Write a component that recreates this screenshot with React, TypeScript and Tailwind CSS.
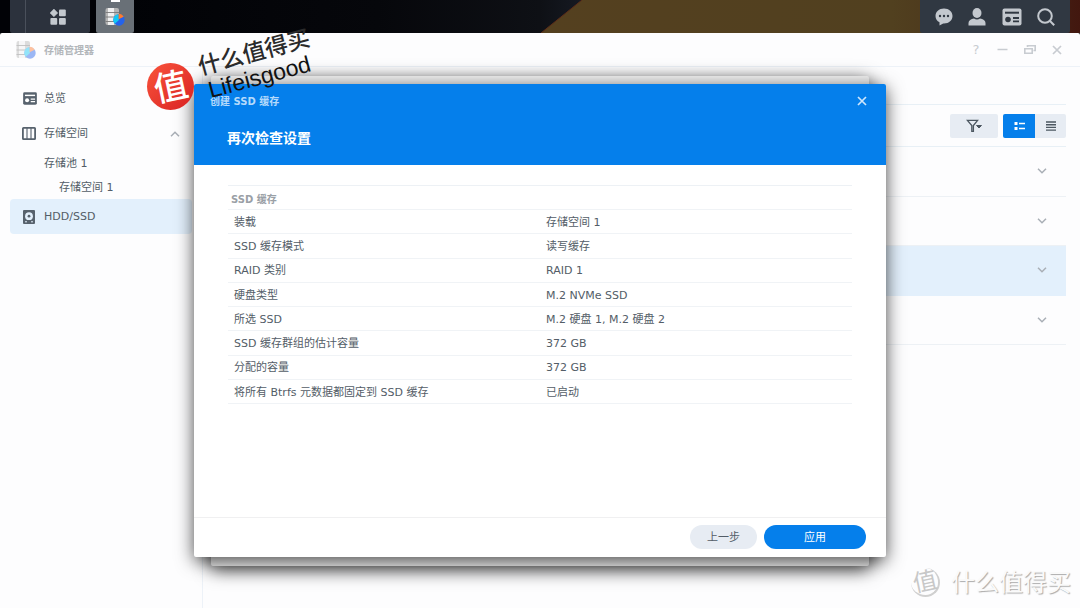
import type { ReactNode } from "react";

const rows = [
  ["装载", "存储空间 1"],
  ["SSD 缓存模式", "读写缓存"],
  ["RAID 类别", "RAID 1"],
  ["硬盘类型", "M.2 NVMe SSD"],
  ["所选 SSD", "M.2 硬盘 1, M.2 硬盘 2"],
  ["SSD 缓存群组的估计容量", "372 GB"],
  ["分配的容量", "372 GB"],
  ["将所有 Btrfs 元数据都固定到 SSD 缓存", "已启动"],
];

function StorageIcon({ className }: { className?: string }) {
  return (
    <svg viewBox="0 0 20 20" className={className} aria-hidden="true">
      <rect x="0.5" y="1" width="13.5" height="17" rx="2" fill="#b5b5b5" />
      <rect x="3" y="1" width="6" height="17" fill="#efefef" />
      <path d="M0.5 5.5h13.500M0.500 10h13.500M0.500 14.500h13.500" stroke="#777" strokeWidth="0.9" />
      <circle cx="14" cy="13" r="5.7" fill="#2563eb" />
      <path d="M14 13L9.8 16.8A5.700 5.700 0 0 1 13.600 7.300z" fill="#12c8f4" />
      <path d="M13.600 12.300V6.800A5.700 5.700 0 0 1 18.600 9.800z" fill="#ff7a2e" />
    </svg>
  );
}

function CardIcon({ className, cut }: { className?: string; cut: string }) {
  return (
    <svg viewBox="0 0 20 18" className={className} aria-hidden="true">
      <rect x="0.5" y="0.5" width="19" height="17" rx="2" fill="currentColor" />
      <path d="M3 4.7h14" stroke={cut} strokeWidth="2" />
      <circle cx="6" cy="11.5" r="2.8" fill={cut} />
      <path d="M11 10h6M11 13.4h6" stroke={cut} strokeWidth="1.8" />
    </svg>
  );
}

function Chevron({ up }: { up?: boolean }) {
  return (
    <svg
      viewBox="0 0 10 6"
      className="h-[6px] w-[10px]"
      fill="none"
      stroke="#a9afb6"
      strokeWidth="1.5"
      aria-hidden="true"
    >
      <path d={up ? "M1 5.2l4-4 4 4" : "M1 0.8l4 4 4-4"} />
    </svg>
  );
}

function Taskbar() {
  return (
    <header className="relative flex h-[33px] shrink-0 justify-between bg-[#010206] px-[10px] text-[#c3c8ce]">
      <svg
        viewBox="0 0 1080 33"
        preserveAspectRatio="none"
        className="absolute inset-0 h-full w-full"
        aria-hidden="true"
      >
        <defs>
          <linearGradient id="night">
            <stop offset="0.1" stopColor="#010206" />
            <stop offset="0.35" stopColor="#06070b" />
            <stop offset="0.5" stopColor="#0e1015" />
            <stop offset="0.55" stopColor="#181c26" />
          </linearGradient>
          <linearGradient id="sand">
            <stop offset="0" stopColor="#54401f" />
            <stop offset="0.65" stopColor="#51401f" />
            <stop offset="0.85" stopColor="#49301a" />
            <stop offset="1" stopColor="#42170f" />
          </linearGradient>
        </defs>
        <path d="M0 0h1080v33H0z" fill="url(#night)" />
        <path d="M582 0H1080V33H541z" fill="url(#sand)" />
        <path d="M582 0L541 33" stroke="#5c2c18" />
      </svg>
      <div className="relative flex gap-[6px]">
        <div className="flex w-[80px] rounded-b-xs bg-[#2c323d]">
          <span className="w-4 border-r border-[#4a505b]" />
          <button aria-label="主菜单" className="flex flex-1 items-center justify-center">
            <svg viewBox="0 0 16 16" className="h-4 w-4" fill="currentColor" aria-hidden="true">
              <path d="M3.9 0L7.8 3.9 3.9 7.8 0 3.9z" stroke="currentColor" strokeLinejoin="round" strokeWidth="0.5" />
              <rect x="9" y="0.5" width="6.8" height="6.8" rx="1" />
              <rect x="0.4" y="9" width="6.8" height="6.8" rx="1" />
              <rect x="9" y="9" width="6.8" height="6.8" rx="1" />
            </svg>
          </button>
        </div>
        <button
          aria-label="存储管理器"
          className="relative flex w-[38px] items-center justify-center rounded-b-xs bg-[#697077]"
        >
          <span className="absolute top-0 h-[2px] w-[9px] bg-white" />
          <StorageIcon className="h-5 w-5" />
        </button>
      </div>
      <div className="relative flex w-[150px] items-center justify-between rounded-b-xs bg-[#303842] px-[15px]">
        <button aria-label="消息">
          <svg viewBox="0 0 18 18" className="h-[18px] w-[18px]" aria-hidden="true">
            <path d="M9 0.5C4 0.5 0.5 3.7 0.5 8c0 2.8 1.5 5 4 6.3V17.5l3.7-2h.8c5 0 8.5-3.2 8.5-7.5S14 .5 9 .5z" fill="currentColor" />
            <circle cx="5" cy="8" r="1.2" fill="#303842" />
            <circle cx="9" cy="8" r="1.2" fill="#303842" />
            <circle cx="13" cy="8" r="1.2" fill="#303842" />
          </svg>
        </button>
        <button aria-label="用户">
          <svg viewBox="0 0 18 18" className="h-[18px] w-[18px]" fill="currentColor" aria-hidden="true">
            <ellipse cx="9" cy="5" rx="4.5" ry="5" />
            <path d="M.5 17.5v-2.5c0-2.5 2.5-4 5.5-4.5 1.8 1.4 4.2 1.4 6 0 3 .5 5.5 2 5.5 4.5v2.5z" />
          </svg>
        </button>
        <button aria-label="小组件">
          <CardIcon className="h-[18px] w-5" cut="#303842" />
        </button>
        <button aria-label="搜索">
          <svg viewBox="0 0 18 18" className="h-[18px] w-[18px]" fill="none" stroke="currentColor" strokeWidth="2" aria-hidden="true">
            <circle cx="8" cy="8" r="6.8" />
            <path d="M12.8 12.8l4.4 4.4" />
          </svg>
        </button>
      </div>
    </header>
  );
}

function TitleBar() {
  return (
    <div className="flex h-[34px] shrink-0 items-center justify-between border-b border-[#edf2f8] pr-[18px] pl-4 text-[#c8ccd1]">
      <div className="flex items-center gap-2">
        <StorageIcon className="h-5 w-5 opacity-45" />
        <span className="pt-[2px] text-[10px] font-bold text-[#b2b6ba]">存储管理器</span>
      </div>
      <div className="flex items-center gap-[16px]">
        <button aria-label="帮助" className="w-[10px] text-[13px]">?</button>
        <button aria-label="最小化">
          <svg viewBox="0 0 11 11" className="h-[11px] w-[11px]" stroke="currentColor" strokeWidth="1.5" aria-hidden="true">
            <path d="M0.5 5.5h10" />
          </svg>
        </button>
        <button aria-label="还原">
          <svg viewBox="0 0 12 11" className="h-[11px] w-3" fill="none" stroke="currentColor" strokeWidth="1.6" aria-hidden="true">
            <path d="M3.5 3V1.8h7.7v4.7H9.5" />
            <path d="M.8 4.8h7.4v4.4H.8z" />
          </svg>
        </button>
        <button aria-label="关闭">
          <svg viewBox="0 0 10 10" className="h-[10px] w-[10px]" stroke="currentColor" strokeWidth="1.7" aria-hidden="true">
            <path d="M1 1l8 8M9 1L1 9" />
          </svg>
        </button>
      </div>
    </div>
  );
}

function NavItem({ icon, label, active, children }: { icon: ReactNode; label: string; active?: boolean; children?: ReactNode }) {
  return (
    <a
      href="#"
      className={
        active
          ? "flex h-[35px] items-center rounded-sm bg-[#e3f0fc] px-3"
          : "flex h-[35px] items-center px-3"
      }
    >
      <span className="flex w-[22px] text-[#57626d]">{icon}</span>
      <span className="flex-1 pt-[2px]">{label}</span>
      {children}
    </a>
  );
}

function Sidebar() {
  return (
    <nav className="w-[203px] shrink-0 border-r border-[#edf2f8] pt-[14px] pr-[10px] pl-[10px]">
      <NavItem label="总览" icon={<CardIcon className="h-[13px] w-4" cut="#fff" />} />
      <NavItem
        label="存储空间"
        icon={
          <svg viewBox="0 0 14 13" className="h-[13px] w-[14px]" fill="none" stroke="currentColor" aria-hidden="true">
            <rect x="0.9" y="0.9" width="12.2" height="11.2" rx="0.6" strokeWidth="1.8" />
            <path d="M5 1v11M9 1v11" strokeWidth="1.1" />
          </svg>
        }
      >
        <Chevron up />
      </NavItem>
      <a href="#" className="flex h-6 items-center pt-[2px] pl-[34px]">存储池 1</a>
      <a href="#" className="flex h-6 items-center pt-[2px] pl-[49px]">存储空间 1</a>
      <NavItem
        active
        label="HDD/SSD"
        icon={
          <svg viewBox="0 0 14 14" className="h-[14px] w-[14px]" aria-hidden="true">
            <rect x="1" width="12" height="14" rx="1" fill="currentColor" />
            <circle cx="7" cy="6.2" r="3.9" fill="#e3f0fc" />
            <circle cx="7" cy="6.2" r="1.4" fill="currentColor" />
            <path d="M3 11.800h8" stroke="#e3f0fc" strokeDasharray="2 4" />
          </svg>
        }
      />
    </nav>
  );
}

function DriveList() {
  return (
    <main className="min-w-0 flex-1 pt-[37px] pr-[14px]">
      <div className="flex h-[43px] items-center justify-end gap-[5px] border-y border-[#e8f0f6] text-[#4c5761]">
        <button aria-label="筛选" className="flex h-6 w-12 items-center justify-center rounded-xs bg-[#e7ecf3]">
          <svg viewBox="0 0 16 13" className="h-[13px] w-4" fill="none" stroke="currentColor" aria-hidden="true">
            <path d="M1.4 1.3h10.200L7.400 6.600V12.500H5.800V6.600z" strokeWidth="1.300" />
            <path d="M10.500 6.500h5L13 9z" fill="currentColor" />
          </svg>
        </button>
        <div className="flex overflow-hidden rounded-xs">
          <button aria-label="详细视图" className="flex h-6 w-8 items-center justify-center bg-[#057feb] text-white">
            <svg viewBox="0 0 11 10" className="h-[10px] w-[11px]" fill="none" stroke="currentColor" aria-hidden="true">
              <path d="M0.5 2.500h3M0.500 7.500h3" strokeWidth="3" />
              <path d="M5 2.500h6M5 7.500h6" strokeWidth="1.400" />
            </svg>
          </button>
          <button aria-label="列表视图" className="flex h-6 w-[31px] items-center justify-center bg-[#e7ecf3]">
            <svg viewBox="0 0 10 10" className="h-[10px] w-[10px]" stroke="currentColor" strokeWidth="1.4" aria-hidden="true">
              <path d="M0 1h10M0 3.700h10M0 6.400h10M0 9.100h10" />
            </svg>
          </button>
        </div>
      </div>
      <ul className="flex h-[198px] flex-col">
        {[0, 1, 2, 3].map((i) => (
          <li
            key={i}
            className={
              i === 2
                ? "flex flex-1 items-center justify-end border-b border-[#e3f0fc] bg-[#e3f0fc] pr-[19px]"
                : "flex flex-1 items-center justify-end border-b border-[#edf1f5] pr-[19px]"
            }
          >
            <button aria-label="展开">
              <Chevron />
            </button>
          </li>
        ))}
      </ul>
    </main>
  );
}

function ReviewDialog() {
  return (
    <div
      role="dialog"
      aria-label="创建 SSD 缓存"
      className="relative flex min-h-[473px] w-[692px] flex-col rounded-xs bg-white shadow-[0_4px_18px_rgba(0,0,0,0.7)]"
    >
      <div className="h-[81px] rounded-t-xs bg-[#057feb] text-white">
        <div className="flex h-[34px] items-center justify-between pr-[19px] pl-4">
          <span className="text-[10px] font-bold text-[#b5dafb]">创建 SSD 缓存</span>
          <button aria-label="关闭">
            <svg viewBox="0 0 10 10" className="h-[10px] w-[10px]" stroke="#cfe6fc" strokeWidth="1.7" aria-hidden="true">
              <path d="M1 1l8 8M9 1L1 9" />
            </svg>
          </button>
        </div>
        <h1 className="pt-3 pl-[33px] text-[14px] leading-4 font-bold">再次检查设置</h1>
      </div>
      <div className="flex-1 px-[34px] pt-5">
        <table className="h-[219px] w-full table-fixed border-collapse border-y border-[#edf1f5]">
          <thead>
            <tr className="h-6 border-b border-[#f0f3f6]">
              <th colSpan={2} className="pt-[3px] pl-[3px] text-left text-[10px] text-[#9aa0a6]">
                SSD 缓存
              </th>
            </tr>
          </thead>
          <tbody>
            {rows.map(([name, value]) => (
              <tr key={name} className="h-6 border-b border-[#f0f3f6]">
                <td className="pt-[3px] pl-[6px]">{name}</td>
                <td className="pt-[3px] pl-[6px]">{value}</td>
              </tr>
            ))}
          </tbody>
        </table>
      </div>
      <div className="flex h-10 items-start justify-end gap-[7px] border-t border-[#f0f0f1] pt-[7px] pr-5">
        <button className="h-6 w-[67px] rounded-full bg-[#e7ecf3] pt-[2px]">上一步</button>
        <button className="h-6 w-[102px] rounded-full bg-[#057feb] pt-[2px] text-white">应用</button>
      </div>
    </div>
  );
}

function Stamp() {
  return (
    <div className="pointer-events-none absolute top-[63px] left-[147px]">
      <div className="flex h-[47px] w-[47px] items-center justify-center rounded-full bg-linear-to-br from-[#f9523c] to-[#d91f22]">
        <span className="-rotate-12 text-[34px] leading-none font-medium text-white">值</span>
      </div>
      <div className="absolute -top-[10px] left-[61px] origin-bottom-left -rotate-[15deg] whitespace-nowrap text-[#2b2b2b]">
        <div className="text-[23px] leading-[26px] font-medium">什么值得买</div>
        <div className="pl-1 font-['Liberation_Sans'] text-[23px] leading-[24px] text-[#111]">Lifeisgood</div>
      </div>
    </div>
  );
}

function Watermark() {
  return (
    <div className="pointer-events-none absolute right-[9px] bottom-[11px] flex items-center gap-[11px] text-[#fafafa] [text-shadow:1px_1px_1px_#aaa]">
      <div className="flex h-[29px] w-[29px] items-center justify-center rounded-full border-r-2 border-b-2 border-[#d0d0d0]">
        <span className="-rotate-12 text-[24px] leading-none text-[#c8c8c8] [text-shadow:none]">值</span>
      </div>
      <span className="text-[24px] leading-none">什么值得买</span>
    </div>
  );
}

export default function App() {
  return (
    <div className="relative flex min-h-screen flex-col overflow-hidden bg-[#010206] font-['DejaVu_Sans','Noto_Sans_CJK_SC',sans-serif] text-[11px] text-[#535d67]">
      <Taskbar />
      <div className="relative flex flex-1 flex-col rounded-t-xs bg-[#fdfdfe]">
        <TitleBar />
        <div className="flex flex-1">
          <Sidebar />
          <DriveList />
        </div>
        <div className="absolute inset-0 grid place-items-center">
          <div className="col-start-1 row-start-1 h-[490px] w-[658px] rounded-xs bg-[#f0f0f0] shadow-[0_4px_18px_rgba(0,0,0,0.7)]" />
          <div className="col-start-1 row-start-1">
            <ReviewDialog />
          </div>
        </div>
      </div>
      <Stamp />
      <Watermark />
    </div>
  );
}
